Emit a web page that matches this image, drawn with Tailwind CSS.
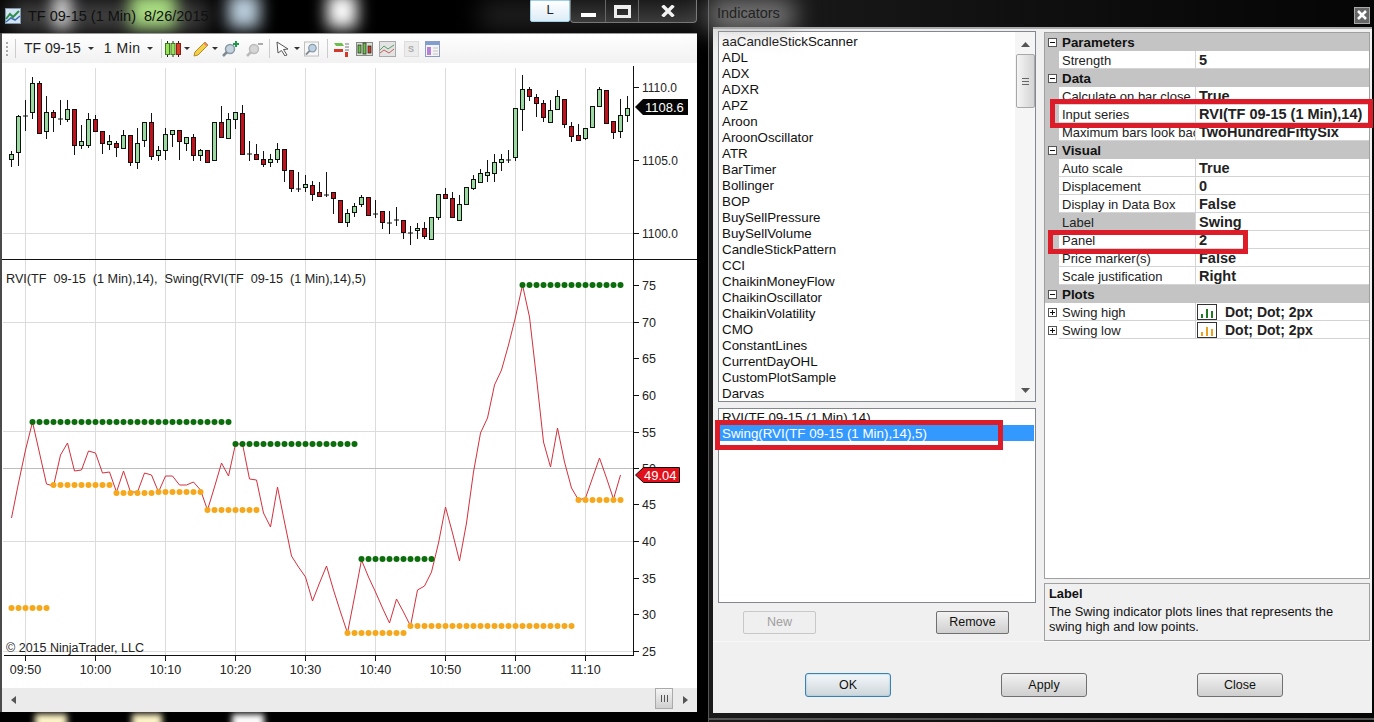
<!DOCTYPE html>
<html lang="en">
<head>
  <meta charset="UTF-8">
  <meta name="viewport" content="width=device-width, initial-scale=1.0">
  <title>NinjaTrader Indicators</title>
  <script src="https://cdn.jsdelivr.net/npm/@tailwindcss/browser@4"></script>
</head>
<body class="bg-black">
  <div class="relative w-[1374px] h-[722px] overflow-hidden bg-black flex [font-family:'Liberation_Sans',sans-serif] text-[#111]">

    <!-- desktop showing through the glass -->
    <div class="absolute left-[8px] top-[2px] w-[200px] h-[28px] bg-white/30 blur-md"></div>
    <div class="absolute left-[54px] top-[-6px] w-[16px] h-[34px] bg-white/90 blur-sm"></div>
    <div class="absolute left-[130px] top-[-6px] w-[46px] h-[34px] bg-[#a8dc80] blur-sm"></div>
    <div class="absolute left-[228px] top-[-6px] w-[32px] h-[34px] bg-[#cfe4f5]/90 blur-sm"></div>
    <div class="absolute left-[327px] top-[-6px] w-[30px] h-[34px] bg-white blur-sm"></div>
    <div class="absolute left-[480px] top-0 w-[230px] h-[30px] bg-[#333]/60 blur-md"></div>
    <div class="absolute left-[35px] top-[714px] w-[32px] h-[14px] bg-[#fff6c8] blur-[3px]"></div>
    <div class="absolute left-[132px] top-[714px] w-[30px] h-[14px] bg-[#fff6c8] blur-[3px]"></div>
    <div class="absolute left-[232px] top-[714px] w-[32px] h-[14px] bg-white blur-[3px]"></div>

    <!-- chart window -->
    <div class="relative w-[708px] shrink-0 flex flex-col">
      <div class="h-[33px] flex items-start">
        <svg class="ml-[5px] mt-[8px] shrink-0" width="16" height="16" viewBox="0 0 16 16">
          <rect x="0.5" y="0.5" width="15" height="15" fill="#d5e4f2" stroke="#7f97ad"/>
          <path d="M1 11L5 6L8 9L14 3" fill="none" stroke="#2f8f4f" stroke-width="2"/>
          <path d="M1 14L6 10L10 12L15 8" fill="none" stroke="#3d6fb0" stroke-width="1.5"/>
        </svg>
        <span class="ml-[7px] mt-[7px] text-[14.5px] leading-[18px] whitespace-pre text-[#101010]">TF 09-15 (1 Min)  8/26/2015</span>
        <div class="ml-auto mr-[11px] flex items-start">
          <div class="w-[40px] h-[22px] bg-gradient-to-b from-white to-[#dcecf6] border border-[#9fd0ea] rounded-b-[2px] text-[13px] leading-[18px] text-center text-[#222]">L</div>
          <div class="w-[127px] h-[23px] flex border border-t-0 border-[#777] rounded-b-[4px] bg-gradient-to-b from-[#1c1c1c] to-[#3c3c3c]">
            <div class="w-[35px] flex items-end justify-center pb-[5px] border-r border-[#666]"><div class="w-[15px] h-[4px] bg-white"></div></div>
            <div class="w-[33px] flex items-center justify-center border-r border-[#666]"><div class="w-[17px] h-[13px] border-[3px] border-t-[4px] border-[#eee]"></div></div>
            <div class="flex-1 flex items-center justify-center">
              <svg width="14" height="12" viewBox="0 0 14 12"><path d="M1.5 0.5L12.5 11.5M12.5 0.5L1.5 11.5" stroke="#f2f2f2" stroke-width="3.4"/></svg>
            </div>
          </div>
        </div>
      </div>

      <div class="w-[697px] flex flex-col border-l-2 border-[#4a4a4a]">
        <!-- toolbar -->
        <div class="h-[30px] flex items-center bg-gradient-to-b from-white to-[#f1f1f1] border-t border-[#999] text-[14px]">
          <div class="ml-[4px] w-[2px] h-[14px] border-l-2 border-dotted border-[#aaa]"></div>
          <div class="ml-[7px] w-px h-[19px] bg-[#ccc]"></div>
          <span class="ml-[8px] text-[#222]">TF 09-15</span>
          <svg class="ml-[7px]" width="6" height="3" viewBox="0 0 6 3"><path d="M0 0H6L3 3Z" fill="#333"/></svg>
          <span class="ml-[10px] tracking-[0.5px] text-[#222]">1 Min</span>
          <svg class="ml-[6px]" width="6" height="3" viewBox="0 0 6 3"><path d="M0 0H6L3 3Z" fill="#333"/></svg>
          <div class="ml-[8px] w-px h-[19px] bg-[#ccc]"></div>
          <svg class="ml-[3px]" width="16" height="16" viewBox="0 0 16 16">
            <path d="M2.5 0V16M8 0V16M13.5 0V16" stroke="#222"/>
            <rect x="0.5" y="2.5" width="4" height="11" fill="#9be05a" stroke="#3d7d1d"/>
            <rect x="6" y="2.5" width="4" height="11" fill="#9be05a" stroke="#3d7d1d"/>
            <rect x="11.5" y="2.5" width="4" height="11" fill="#d8402a" stroke="#8c1d10"/>
          </svg>
          <svg class="ml-[3px]" width="6" height="3" viewBox="0 0 6 3"><path d="M0 0H6L3 3Z" fill="#333"/></svg>
          <svg class="ml-[3px]" width="16" height="16" viewBox="0 0 16 16">
            <path d="M12 1L15 4L5 14L1 15L2 11Z" fill="#f4cf4a" stroke="#b58a1c"/>
            <path d="M12 1L15 4L13.5 5.5L10.5 2.5Z" fill="#e88a6a"/>
          </svg>
          <svg class="ml-[3px]" width="6" height="3" viewBox="0 0 6 3"><path d="M0 0H6L3 3Z" fill="#333"/></svg>
          <svg class="ml-[4px]" width="18" height="16" viewBox="0 0 18 16">
            <circle cx="8" cy="8" r="4.5" fill="#c3d2dd" stroke="#8a9aa6" stroke-width="1.5"/>
            <path d="M5 11L1 15" stroke="#7d8a94" stroke-width="2.5"/>
            <path d="M14 0V6M11 3H17" stroke="#1f9a4a" stroke-width="2"/>
          </svg>
          <svg class="ml-[6px]" width="17" height="16" viewBox="0 0 17 16">
            <circle cx="8" cy="8" r="4.5" fill="#d6d6d6" stroke="#bbb" stroke-width="1.5"/>
            <path d="M5 11L1 15" stroke="#bbb" stroke-width="2.5"/>
            <path d="M12 3H17" stroke="#aaa" stroke-width="2"/>
          </svg>
          <div class="ml-[6px] w-px h-[19px] bg-[#ccc]"></div>
          <svg class="ml-[6px]" width="13" height="15" viewBox="0 0 13 15"><path d="M1 1L12 8L7.5 8.5L11 14L9 15L5.5 9.5L2 12Z" fill="#fff" stroke="#555"/></svg>
          <svg class="ml-[5px]" width="6" height="3" viewBox="0 0 6 3"><path d="M0 0H6L3 3Z" fill="#333"/></svg>
          <svg class="ml-[4px]" width="15" height="16" viewBox="0 0 16 16">
            <rect x="0.5" y="0.5" width="15" height="15" fill="#f7f7f7" stroke="#bbb"/>
            <circle cx="9" cy="7" r="4" fill="#bcd2e4" stroke="#8a9aa6" stroke-width="1.3"/>
            <path d="M6 10L2 14" stroke="#7d8a94" stroke-width="2"/>
          </svg>
          <div class="ml-[8px] w-px h-[19px] bg-[#ccc]"></div>
          <svg class="ml-[5px]" width="16" height="16" viewBox="0 0 16 16">
            <path d="M1 2H9L11 5H3Z" fill="#6cbf4b"/>
            <path d="M1 8H10V11H1Z" fill="#d33a2c"/>
            <path d="M12 3H16M12 6H16M12 9H16" stroke="#777"/>
            <path d="M12 11H15V16H12Z" fill="#d33a2c"/>
          </svg>
          <svg class="ml-[7px]" width="17" height="16" viewBox="0 0 17 16">
            <rect x="0.5" y="1.5" width="16" height="13" fill="#d8e2cf" stroke="#888"/>
            <rect x="2" y="4" width="3" height="8" fill="#6cc04a" stroke="#222" stroke-width="0.7"/>
            <rect x="7" y="2" width="3" height="11" fill="#6cc04a" stroke="#222" stroke-width="0.7"/>
            <rect x="12" y="5" width="3" height="7" fill="#d33a2c" stroke="#222" stroke-width="0.7"/>
          </svg>
          <svg class="ml-[6px]" width="17" height="16" viewBox="0 0 17 16">
            <rect x="0.5" y="0.5" width="16" height="15" fill="#e3e3e3" stroke="#aaa"/>
            <path d="M1 9L5 5L9 8L15 4" fill="none" stroke="#55a06a"/>
            <path d="M1 12L5 9L10 12L15 8" fill="none" stroke="#c8605a"/>
          </svg>
          <div class="ml-[8px] w-[15px] h-[16px] bg-[#ececec] border border-[#ddd] text-[9px] leading-[14px] font-bold text-center text-[#aaa]">S</div>
          <svg class="ml-[6px]" width="15" height="16" viewBox="0 0 15 16">
            <rect x="0.5" y="0.5" width="14" height="15" fill="#f4f4f4" stroke="#8b9cc0"/>
            <rect x="1" y="1" width="13" height="3" fill="#7f9fd0"/>
            <rect x="2" y="6" width="4" height="8" fill="#b483d6"/>
            <path d="M8 7H13M8 10H13M8 13H13" stroke="#c4c4c4"/>
          </svg>
        </div>

        <!-- chart area, drawn by the script below -->
        <svg id="chart" class="block bg-white" width="695" height="625" viewBox="2 63 695 625"></svg>

        <!-- horizontal scroller -->
        <div class="h-[24px] bg-[#ebebeb] flex items-start">
          <svg class="ml-[9px] mt-[8px]" width="5" height="8" viewBox="0 0 5 8"><path d="M5 0V8L0 4Z" fill="#555"/></svg>
          <div class="ml-auto w-[18px] h-[21px] bg-gradient-to-b from-[#f4f4f4] to-[#cfcfcf] border border-[#aaa] flex items-center justify-center gap-[2px]">
            <div class="w-px h-[7px] bg-[#555]"></div><div class="w-px h-[7px] bg-[#555]"></div><div class="w-px h-[7px] bg-[#555]"></div>
          </div>
          <svg class="ml-[10px] mr-[9px] mt-[8px]" width="5" height="8" viewBox="0 0 5 8"><path d="M0 0V8L5 4Z" fill="#555"/></svg>
        </div>
      </div>
    </div>

    <!-- Indicators dialog -->
    <div class="relative w-[666px] shrink-0 flex flex-col border-l border-[#555] bg-gradient-to-r from-[#1b1b1b] to-[#050505]">
      <div class="relative h-[27px] flex items-center">
        <div class="absolute left-0 top-0 w-[85px] h-[30px] bg-[#aaa]/70 blur-md"></div>
        <span class="relative ml-[8px] text-[14.5px] text-[#222]">Indicators</span>
        <div class="ml-auto mr-[4px] mt-[3px] w-[16px] h-[17px] bg-[#666] border border-[#aaa] flex items-center justify-center">
          <svg width="10" height="10" viewBox="0 0 10 10"><path d="M1 1L9 9M9 1L1 9" stroke="#fff" stroke-width="2.6"/></svg>
        </div>
      </div>

      <div class="ml-[4px] w-[659px] h-[686px] bg-[#f0f0f0] border-t-2 border-[#aaa] flex flex-col text-[13.33px]">
        <div class="h-[613px] flex border-b border-[#f8f8f8]">
          <!-- left column -->
          <div class="ml-[5px] w-[318px] flex flex-col pt-[2px]">
            <div class="h-[371px] bg-white border border-[#828790] flex">
              <div id="indicator-list" class="flex-1 pt-[2px] pl-[3px] leading-[16px]"></div>
              <div class="w-[20px] bg-[#f5f5f5] flex flex-col items-center pt-[10px]">
                <svg width="9" height="5" viewBox="0 0 9 5"><path d="M0 5L4.5 0L9 5Z" fill="#555"/></svg>
                <div class="mt-[7px] w-[19px] h-[54px] bg-gradient-to-r from-[#f4f4f4] to-[#d4d4d4] border border-[#a8a8a8] rounded-[2px] flex flex-col items-center justify-center gap-[2px]">
                  <div class="w-[7px] h-px bg-[#666]"></div><div class="w-[7px] h-px bg-[#666]"></div><div class="w-[7px] h-px bg-[#666]"></div>
                </div>
                <svg class="mt-auto mb-[8px]" width="9" height="5" viewBox="0 0 9 5"><path d="M0 0L4.5 5L9 0Z" fill="#555"/></svg>
              </div>
            </div>
            <div class="mt-[6px] h-[195px] bg-white border border-[#828790]">
              <div class="h-[16px] leading-[18px] pl-[3px] whitespace-pre">RVI(TF 09-15 (1 Min),14)</div>
              <div class="h-[16px] leading-[18px] mx-px pl-[2px] bg-[#3399ff] text-white whitespace-pre">Swing(RVI(TF 09-15 (1 Min),14),5)</div>
            </div>
            <div class="mt-[8px] flex">
              <div class="ml-[25px] w-[73px] h-[23px] border border-[#c8c8c8] rounded-[2px] bg-[#efefef] text-center text-[12.5px] leading-[21px] text-[#a0a0a0]">New</div>
              <div class="ml-auto mr-[27px] w-[73px] h-[23px] border border-[#707070] rounded-[2px] bg-gradient-to-b from-[#f2f2f2] to-[#cfcfcf] text-center text-[12.5px] leading-[21px]">Remove</div>
            </div>
          </div>
          <!-- right column -->
          <div class="ml-[8px] w-[326px] flex flex-col pt-[3px]">
            <div id="prop-grid" class="h-[548px] bg-white border border-[#a0a0a0]"></div>
            <div class="mt-[4px] h-[58px] border border-[#a0a0a0] pl-[4px] pt-[2px] leading-[15px] text-[12.85px]">
              <div class="font-bold">Label</div>
              <div class="mt-[3px]">The Swing indicator plots lines that represents the<br>swing high and low points.</div>
            </div>
          </div>
        </div>
        <div class="pt-[31px] pl-[92px] flex">
          <div class="w-[86px] h-[24px] border border-[#3c7fb1] rounded-[3px] bg-gradient-to-b from-[#f2f7fa] to-[#cfd6da] shadow-[inset_0_0_2px_#6fc3ea] text-center text-[12.5px] leading-[22px]">OK</div>
          <div class="ml-[110px] w-[86px] h-[24px] border border-[#707070] rounded-[3px] bg-gradient-to-b from-[#f2f2f2] to-[#cfcfcf] text-center text-[12.5px] leading-[22px]">Apply</div>
          <div class="ml-[110px] w-[86px] h-[24px] border border-[#707070] rounded-[3px] bg-gradient-to-b from-[#f2f2f2] to-[#cfcfcf] text-center text-[12.5px] leading-[22px]">Close</div>
        </div>
      </div>
      <div class="mt-[5px] ml-0 h-[2px] bg-[#555]"></div>
    </div>

    <!-- red markup drawn on the screenshot -->
    <div class="absolute left-[1050px] top-[99px] w-[323px] h-[29px] border-[5px] border-[#dd1c2a]"></div>
    <div class="absolute left-[1048px] top-[230px] w-[200px] h-[24px] border-[5px] border-[#dd1c2a]"></div>
    <div class="absolute left-[715px] top-[420px] w-[288px] h-[30px] border-[5px] border-[#dd1c2a]"></div>
  </div>

  <script>
    // [wick top, body top, body bottom, wick bottom, type], in 3x crop units
    const candles = [
      [273,283,298,320,'g'],[166,169,275,318,'g'],[120,164,167,212,'d'],[52,70,157,176,'g'],[64,70,218,218,'r'],
      [108,157,214,236,'g'],[151,157,170,215,'r'],[120,175,179,194,'d'],[120,148,178,185,'g'],[148,148,254,284,'r'],
      [194,244,254,268,'g'],[160,178,254,263,'g'],[166,178,212,215,'r'],[212,214,250,281,'r'],[225,244,251,269,'g'],
      [244,250,260,290,'r'],[210,226,263,268,'g'],[226,226,307,317,'r'],[205,250,307,326,'g'],[185,186,241,260,'g'],
      [160,187,289,299,'r'],[259,271,284,303,'g'],[205,223,271,299,'g'],[210,211,223,260,'g'],[211,211,244,299,'r'],
      [232,232,250,272,'g'],[223,232,284,302,'r'],[268,271,284,302,'g'],[271,271,307,307,'r'],[185,187,301,301,'g'],
      [138,187,232,235,'r'],[160,178,235,236,'g'],[157,157,178,206,'g'],[135,160,281,283,'r'],[243,279,282,302,'d'],
      [252,283,298,299,'r'],[274,298,311,320,'r'],[283,298,307,320,'g'],[250,268,298,310,'g'],[268,268,331,365,'r'],
      [329,331,385,395,'r'],[337,385,389,395,'d'],[346,373,382,395,'g'],[364,376,403,422,'r'],[366,397,408,412,'r'],
      [337,403,407,412,'d'],[397,397,415,461,'r'],[420,421,487,488,'r'],[448,460,487,500,'g'],[430,438,455,470,'g'],
      [404,412,433,440,'g'],[412,412,464,468,'r'],[420,460,464,474,'d'],[453,454,487,506,'r'],[453,487,490,521,'d'],
      [442,478,481,497,'d'],[481,481,517,536,'r'],[498,517,520,554,'d'],[490,505,511,536,'g'],[487,505,527,538,'r'],
      [470,471,536,538,'g'],[403,403,470,479,'g'],[385,403,413,415,'r'],[397,415,472,473,'r'],[405,433,480,482,'g'],
      [382,382,431,433,'g'],[346,358,383,389,'g'],[328,340,365,368,'g'],[301,337,346,365,'g'],[283,307,340,365,'g'],
      [283,298,307,332,'g'],[271,298,301,310,'d'],[145,145,292,302,'g'],[46,88,148,212,'g'],[80,88,109,122,'r'],
      [103,112,130,170,'r'],[121,130,170,185,'r'],[121,151,185,187,'g'],[91,109,148,148,'g'],[118,118,193,203,'r'],
      [187,197,227,245,'r'],[193,226,241,243,'r'],[203,205,235,240,'g'],[137,138,202,205,'g'],[80,88,137,138,'g'],
      [91,91,188,193,'r'],[184,184,217,236,'r'],[118,166,214,233,'g'],[109,145,166,185,'g']
    ];

    // y of the RVI line for each bar, starting at 09:48
    const rvi = [518,483,450,422,453,484,486,455,443,471,470,451,453,473,472,492,471,492,492,473,475,492,476,476,485,485,482,490,510,487,463,476,444,444,479,480,513,527,487,522,556,567,577,601,583,566,590,612,633,597,560,577,592,608,623,599,612,626,590,586,572,543,507,533,561,523,472,433,418,385,370,345,317,285,317,378,442,467,428,462,488,500,498,478,458,478,499,475];

    const swingDots = [
      ['#0b6d0b',422,32,29],['#0b6d0b',444,235,18],['#0b6d0b',559,361,11],['#0b6d0b',285,522,15],
      ['#f5a81c',608,11,6],['#f5a81c',485,53,9],['#f5a81c',493,116,6],['#f5a81c',492,158,7],
      ['#f5a81c',510,207,8],['#f5a81c',633,347,9],['#f5a81c',626,410,24],['#f5a81c',500,578,7]
    ];

    function drawChart() {
      let s = '';
      // grid
      for (let k = 0; k < 9; k++) {
        const x = 25.5 + 70 * k;
        s += `<line x1="${x}" x2="${x}" y1="68" y2="655" stroke="#dcdcdc"/>`;
      }
      [233.5, 322.5, 431.5, 541.5, 651.5].forEach(y => {
        s += `<line x1="3" x2="633" y1="${y}" y2="${y}" stroke="#dcdcdc"/>`;
      });
      s += `<line x1="3" x2="633" y1="468.5" y2="468.5" stroke="#bdbdbd"/>`;

      // candles
      candles.forEach((c, i) => {
        const x = 11.5 + 7 * i;
        const top = Math.round(60 + c[0] / 3), bt = Math.round(60 + c[1] / 3) + 0.5;
        const bb = Math.round(60 + c[2] / 3) + 0.5, low = Math.round(60 + c[3] / 3);
        s += `<line x1="${x}" x2="${x}" y1="${top}" y2="${low}" stroke="#111"/>`;
        if (c[4] === 'd') {
          s += `<line x1="${x - 2.5}" x2="${x + 2.5}" y1="${bt + 0.5}" y2="${bt + 0.5}" stroke="#111"/>`;
        } else {
          s += `<rect x="${x - 2}" y="${bt}" width="4" height="${bb - bt}" fill="${c[4] === 'g' ? '#9ad9a0' : '#c0121c'}" stroke="#111"/>`;
        }
      });

      // indicator
      const pts = rvi.map((y, i) => `${11.5 + 7 * i},${y}`).join(' ');
      s += `<polyline points="${pts}" fill="none" stroke="#d2303c"/>`;
      swingDots.forEach(([color, y, x0, n]) => {
        for (let i = 0; i < n; i++) {
          s += `<circle cx="${x0 + 0.5 + 7 * i}" cy="${y}" r="3" fill="${color}"/>`;
        }
      });

      // axes
      s += `<line x1="2" x2="697" y1="259.5" y2="259.5" stroke="#111"/>`;
      s += `<line x1="633.5" x2="633.5" y1="66" y2="655" stroke="#111"/>`;
      s += `<line x1="4" x2="634" y1="655.5" y2="655.5" stroke="#111"/>`;

      [['1110.0', 87], ['1105.0', 160], ['1100.0', 233]].forEach(([t, y]) => {
        s += `<line x1="634" x2="639" y1="${y + 0.5}" y2="${y + 0.5}" stroke="#111"/>`;
        s += `<text x="642" y="${y + 5}" font-size="12" fill="#222">${t}</text>`;
      });
      [[75,285],[70,322],[65,358],[60,395],[55,432],[50,468],[45,504],[40,541],[35,578],[30,614],[25,651]].forEach(([t, y]) => {
        s += `<line x1="634" x2="639" y1="${y + 0.5}" y2="${y + 0.5}" stroke="#111"/>`;
        s += `<text x="642" y="${y + 5}" font-size="12.5" fill="#222">${t}</text>`;
      });
      ['09:50','10:00','10:10','10:20','10:30','10:40','10:50','11:00','11:10'].forEach((t, k) => {
        const x = 25.5 + 70 * k;
        s += `<line x1="${x}" x2="${x}" y1="656" y2="661" stroke="#111"/>`;
        s += `<text x="${x}" y="674" font-size="12.5" text-anchor="middle" fill="#222">${t}</text>`;
      });

      // price markers
      s += `<path d="M635 107L643 99H688V115H643Z" fill="#050505"/>`;
      s += `<text x="645" y="112" font-size="13" fill="#fff">1108.6</text>`;
      s += `<path d="M635.5 475L643.5 467.5H679.5V482.5H643.5Z" fill="#e1101a" stroke="#111"/>`;
      s += `<text x="644" y="480" font-size="13" fill="#fff">49.04</text>`;

      s += `<text x="6" y="283" font-size="12.65" fill="#222" class="whitespace-pre">RVI(TF  09-15  (1 Min),14),  Swing(RVI(TF  09-15  (1 Min),14),5)</text>`;
      s += `<text x="6" y="652" font-size="12.5" fill="#222">© 2015 NinjaTrader, LLC</text>`;
      document.getElementById('chart').innerHTML = s;
    }

    const indicators = ['aaCandleStickScanner','ADL','ADX','ADXR','APZ','Aroon','AroonOscillator','ATR','BarTimer','Bollinger','BOP','BuySellPressure','BuySellVolume','CandleStickPattern','CCI','ChaikinMoneyFlow','ChaikinOscillator','ChaikinVolatility','CMO','ConstantLines','CurrentDayOHL','CustomPlotSample','Darvas'];

    const props = [
      ['h','Parameters'],['r','Strength','5'],
      ['h','Data'],['r','Calculate on bar close','True'],['r','Input series','RVI(TF 09-15 (1 Min),14)'],['r','Maximum bars look back','TwoHundredFiftySix'],
      ['h','Visual'],['r','Auto scale','True'],['r','Displacement','0'],['r','Display in Data Box','False'],['s','Label','Swing'],['r','Panel','2'],['r','Price marker(s)','False'],['r','Scale justification','Right'],
      ['h','Plots'],['p','Swing high','Dot; Dot; 2px','#1f7a1f'],['p','Swing low','Dot; Dot; 2px','#eaa21c']
    ];

    function expander(open) {
      return `<svg class="ml-[3px] shrink-0" width="9" height="9" viewBox="0 0 9 9"><rect x="0.5" y="0.5" width="8" height="8" fill="#fff" stroke="#555"/><path d="M2 4.5H7${open ? '' : 'M4.5 2V7'}" stroke="#111"/></svg>`;
    }

    function swatch(color) {
      return `<svg class="shrink-0" width="20" height="16" viewBox="0 0 20 16"><rect x="0.5" y="0.5" width="19" height="15" fill="#fff" stroke="#333"/><path d="M5 14V10M10 14V5M15 14V7" stroke="${color}" stroke-width="2"/></svg>`;
    }

    function drawGrid() {
      document.getElementById('prop-grid').innerHTML = props.map(p => {
        if (p[0] === 'h') {
          return `<div class="h-[18px] flex items-center bg-[#c4c4c4] font-bold text-[13.33px]">${expander(true)}<span class="ml-[5px] mt-[2px]">${p[1]}</span></div>`;
        }
        const gutter = p[0] === 'p'
          ? `<div class="w-[14px] shrink-0 flex items-center">${expander(false)}</div>`
          : `<div class="w-[14px] shrink-0 bg-[#c4c4c4]"></div>`;
        const nameBg = p[0] === 's' ? 'bg-[#c4c4c4]' : '';
        const value = p[0] === 'p'
          ? `<div class="flex-1 flex items-center pl-px border-l border-[#d4d4d4] font-bold text-[14px] whitespace-pre">${swatch(p[3])}<span class="ml-[8px] mt-[2px]">${p[2]}</span></div>`
          : `<div class="flex-1 pl-[3px] border-l border-[#d4d4d4] font-bold text-[14.5px] whitespace-pre overflow-hidden">${p[2]}</div>`;
        return `<div class="h-[18px] flex leading-[19px] text-[#222]">${gutter}<div class="flex-1 flex border-b border-[#d4d4d4]"><div class="w-[136px] shrink-0 pl-[3px] overflow-hidden whitespace-pre text-[13px] ${nameBg}">${p[1]}</div>${value}</div></div>`;
      }).join('');
    }

    document.getElementById('indicator-list').innerHTML = indicators.map(n => `<div>${n}</div>`).join('');
    drawChart();
    drawGrid();
  </script>
</body>
</html>
